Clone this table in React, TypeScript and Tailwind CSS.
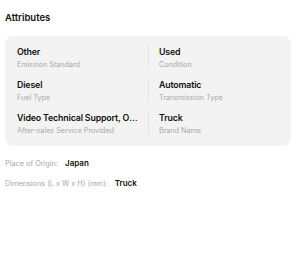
const ATTRS = [
  { value: "Other", label: "Emission Standard" },
  { value: "Used", label: "Condition" },
  { value: "Diesel", label: "Fuel Type" },
  { value: "Automatic", label: "Transmission Type" },
  { value: "Video Technical Support, Online Support", label: "After-sales Service Provided" },
  { value: "Truck", label: "Brand Name" },
];

const EXTRA = [
  { label: "Place of Origin:", value: "Japan" },
  { label: "Dimensions (L x W x H) (mm):", value: "Truck" },
];

export default function App() {
  return (
    <div className="w-[300px] h-[256px] bg-white pl-[5px] pr-[9px] pt-[12px] font-['Inter',sans-serif] text-[#111]">
      <h2 className="text-[9.5px] leading-[12px] font-semibold">Attributes</h2>

      <div className="mt-[12px] bg-[#f3f3f3] rounded-[8px] px-[12px] pt-[9px] pb-[11px] grid grid-cols-2 gap-y-[9px]">
        {ATTRS.map((a, i) => (
          <div
            key={i}
            className={i % 2 === 1 ? "border-l border-[#e4e4e4] pl-[10px] min-w-0" : "pr-[9px] min-w-0"}
          >
            <p className="text-[8.8px] leading-[13px] font-semibold tracking-[-0.15px] truncate">{a.value}</p>
            <p className="mt-[2px] text-[7.2px] leading-[9px] text-[#a8a8a8] truncate">{a.label}</p>
          </div>
        ))}
      </div>

      <div className="mt-[11px] flex flex-col gap-[7px]">
        {EXTRA.map((e, i) => (
          <div key={i} className="flex items-baseline gap-[7px] leading-[12px]">
            <span className="text-[7.3px] text-[#a8a8a8]">{e.label}</span>
            <span className="text-[8px] font-semibold">{e.value}</span>
          </div>
        ))}
      </div>
    </div>
  );
}
